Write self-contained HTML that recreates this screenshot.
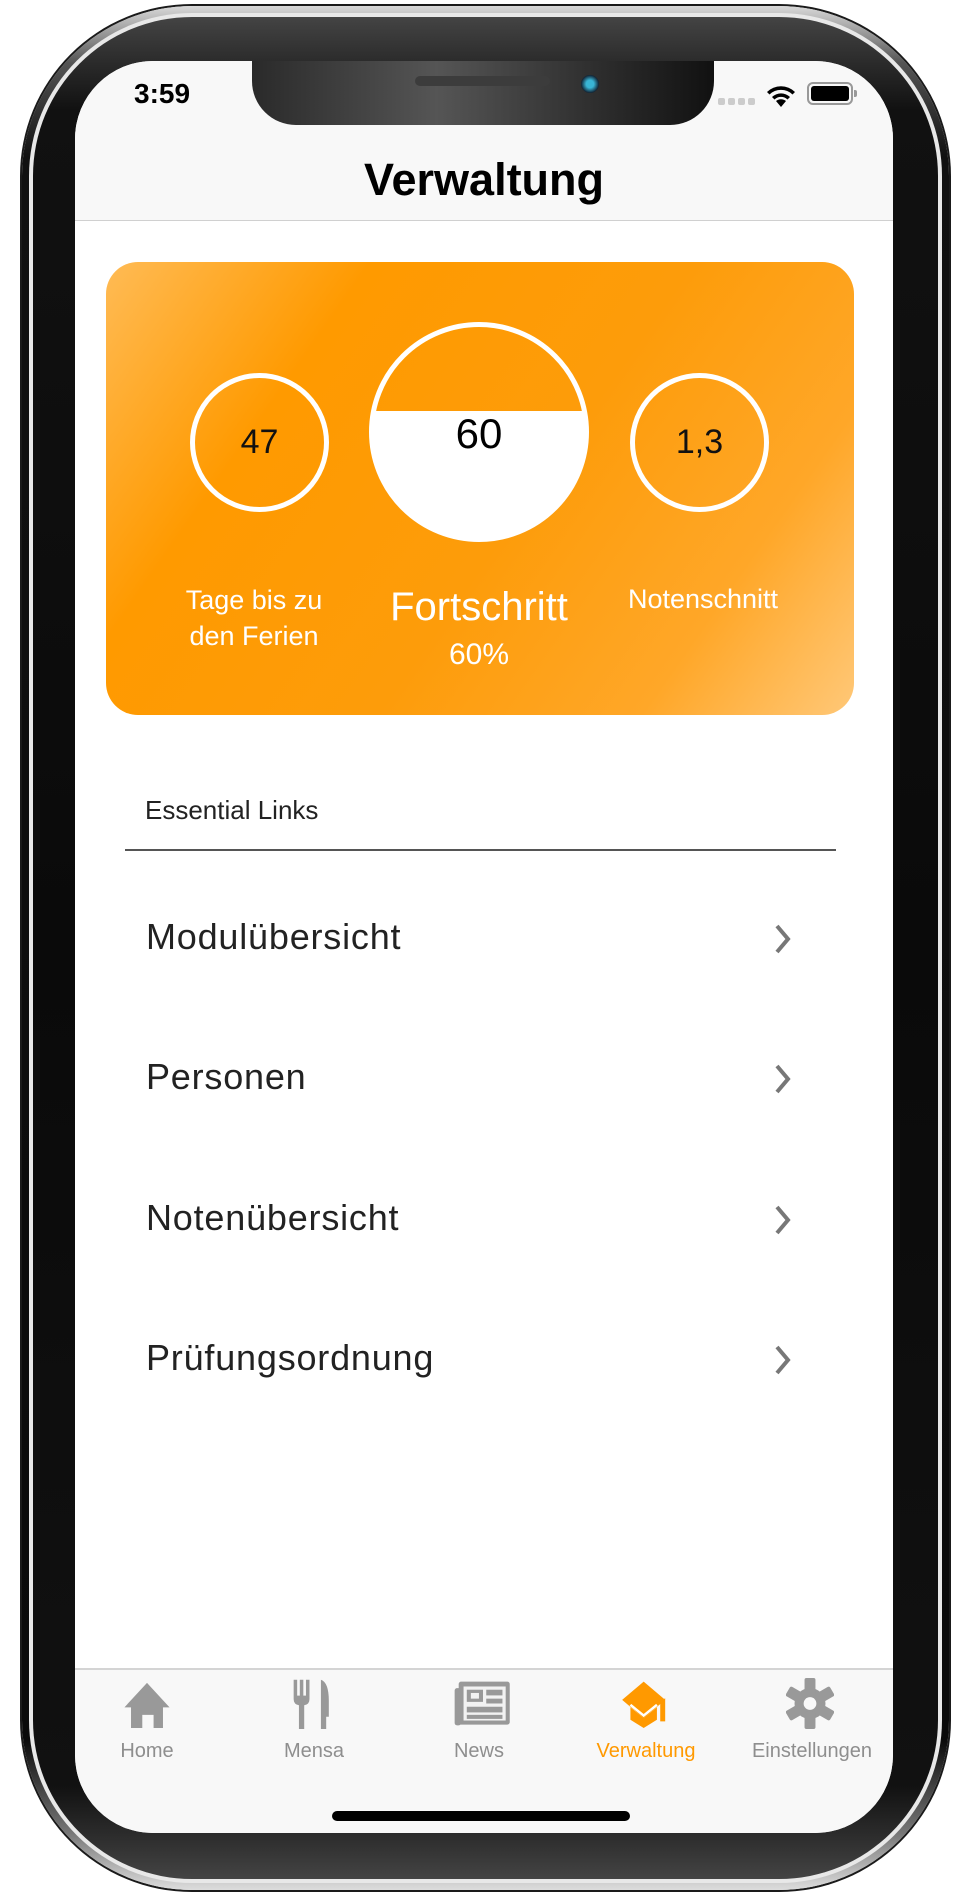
<!DOCTYPE html>
<html><head><meta charset="utf-8"><style>
*{margin:0;padding:0;box-sizing:border-box}
html,body{width:967px;height:1901px;background:#fff;overflow:hidden;font-family:"Liberation Sans",Arial,sans-serif}
.abs{position:absolute}
#outer{left:22px;top:6px;width:927px;height:1884px;border-radius:170px;background:linear-gradient(180deg,#d8d8d8,#555 3%,#111 8%,#0a0a0a 92%,#777 97%,#ddd);box-shadow:0 0 0 2px #1a1a1a}
#ring{left:29px;top:13px;width:913px;height:1870px;border-radius:163px;background:#e8e8e8}
#bezel{left:33px;top:17px;width:905px;height:1862px;border-radius:159px;background:linear-gradient(180deg,#444,#111 5%,#0a0a0a 50%,#111 95%,#444)}
#screen{left:75px;top:61px;width:818px;height:1772px;border-radius:78px;background:#fff;overflow:hidden}
.t{position:absolute;white-space:nowrap}
.li{position:absolute;left:71px;font-size:36px;letter-spacing:0.8px;color:#222;white-space:nowrap}
.lbl{position:absolute;top:1679px;text-align:center;font-size:20px;color:#8e8e8e;white-space:nowrap}
</style></head><body>
<div id="outer" class="abs"></div>
<div id="ring" class="abs"></div>
<div id="bezel" class="abs"></div>
<div id="screen" class="abs">
  <div class="abs" style="left:0;top:0;width:818px;height:160px;background:#f8f8f8;border-bottom:1px solid #d0d0d0"></div>
  <div class="t" style="left:59px;top:17px;font-size:28px;font-weight:bold;color:#000">3:59</div>
  <div class="abs" style="left:177px;top:-10px;width:462px;height:74px;border-radius:0 0 44px 44px;background:linear-gradient(90deg,#2a2a2a,#555 40%,#333 70%,#111)"></div>
  <div class="abs" style="left:340px;top:15px;width:135px;height:10px;border-radius:5px;background:#3c3c3c"></div>
  <div class="abs" style="left:506px;top:14px;width:18px;height:18px;border-radius:50%;background:radial-gradient(#39b5d5 30%,#123 70%)"></div>
  <div class="abs" style="left:643px;top:37px;width:7px;height:7px;border-radius:2px;background:#ccc;box-shadow:10px 0 #ccc,20px 0 #ccc,30px 0 #ccc"></div>
  <svg class="abs" style="left:690px;top:22px" width="32" height="24" viewBox="0 0 32 24"><path d="M16 24 L11 18 A8 8 0 0 1 21 18Z M7 14 A13 13 0 0 1 25 14 L22.5 16.5 A9.5 9.5 0 0 0 9.5 16.5Z M2 9 A20 20 0 0 1 30 9 L27.5 11.5 A16.5 16.5 0 0 0 4.5 11.5Z" fill="#000"/></svg>
  <div class="abs" style="left:732px;top:21px;width:46px;height:23px;border:2px solid #999;border-radius:6px;padding:2px"><div style="width:100%;height:100%;background:#000;border-radius:3px"></div></div>
  <div class="abs" style="left:779px;top:29px;width:3px;height:7px;background:#999;border-radius:0 2px 2px 0"></div>
  <div class="t" style="left:0;width:818px;text-align:center;top:93px;font-size:45px;font-weight:bold;color:#000">Verwaltung</div>
  <div class="abs" style="left:31px;top:201px;width:748px;height:453px;border-radius:32px;background:linear-gradient(125deg,#ffbb55 0%,#ff9a00 25%,#fd9c0a 55%,#ffa728 80%,#ffc878 100%)"></div>
  <div class="abs" style="left:115px;top:312px;width:139px;height:139px;border-radius:50%;border:5px solid #fff"></div>
  <div class="t" style="left:115px;width:139px;text-align:center;top:362px;font-size:34px;color:#111">47</div>
  <div class="abs" style="left:555px;top:312px;width:139px;height:139px;border-radius:50%;border:5px solid #fff"></div>
  <div class="t" style="left:555px;width:139px;text-align:center;top:362px;font-size:34px;color:#111">1,3</div>
  <div class="abs" style="left:294px;top:261px;width:220px;height:220px;border-radius:50%;border:5px solid #fff;overflow:hidden;background:linear-gradient(180deg,transparent 0,transparent 40%,#fff 40%)"></div>
  <div class="t" style="left:294px;width:220px;text-align:center;top:349px;font-size:42px;color:#000">60</div>
  <div class="t" style="left:99px;width:160px;text-align:center;top:521px;font-size:27px;line-height:36px;color:#fff">Tage bis zu<br>den Ferien</div>
  <div class="t" style="left:289px;width:230px;text-align:center;top:524px;font-size:40px;color:#fff">Fortschritt</div>
  <div class="t" style="left:289px;width:230px;text-align:center;top:577px;font-size:30px;color:#fff">60%</div>
  <div class="t" style="left:528px;width:200px;text-align:center;top:523px;font-size:27px;color:#fff">Notenschnitt</div>
  <div class="t" style="left:70px;top:734px;font-size:26px;color:#222">Essential Links</div>
  <div class="abs" style="left:50px;top:788px;width:711px;height:2px;background:#555"></div>
  <div class="li" style="top:855px">Modulübersicht</div>
  <div class="li" style="top:995px">Personen</div>
  <div class="li" style="top:1136px">Notenübersicht</div>
  <div class="li" style="top:1276px">Prüfungsordnung</div>
  <svg class="abs" style="left:696px;top:862px" width="24" height="32"><path d="M6 3 L17 16 L6 29" stroke="#777" stroke-width="4" fill="none"/></svg>
  <svg class="abs" style="left:696px;top:1002px" width="24" height="32"><path d="M6 3 L17 16 L6 29" stroke="#777" stroke-width="4" fill="none"/></svg>
  <svg class="abs" style="left:696px;top:1143px" width="24" height="32"><path d="M6 3 L17 16 L6 29" stroke="#777" stroke-width="4" fill="none"/></svg>
  <svg class="abs" style="left:696px;top:1283px" width="24" height="32"><path d="M6 3 L17 16 L6 29" stroke="#777" stroke-width="4" fill="none"/></svg>
  <div class="abs" style="left:0;top:1607px;width:818px;height:170px;background:#f8f8f8;border-top:2px solid #d4d4d4"></div>
  <svg class="abs" style="left:47px;top:1620px" width="50" height="47" viewBox="0 0 52 50"><path d="M26 2 L50 28 L43 28 L43 50 L33 50 L33 36 L21 36 L21 50 L9 50 L9 28 L2 28Z" fill="#999"/></svg>
  <svg class="abs" style="left:214px;top:1617px" width="48" height="51" viewBox="0 0 50 58"><path d="M3 2h4v18h3V2h4v18h3V2h4v22q0 6-6 7v27h-6V31q-6-1-6-7Z M34 58V2q9 3 9 24v18h-3v14Z" fill="#999"/></svg>
  <svg class="abs" style="left:374px;top:1619px" width="68" height="47" viewBox="0 0 70 58"><rect x="5" y="2" width="63" height="53" rx="3" fill="#999"/><rect x="0" y="10" width="8" height="46" rx="3" fill="#999"/><rect x="11" y="8" width="52" height="42" fill="#f2f2f2"/><rect x="15" y="12" width="20" height="15" fill="#999"/><rect x="20" y="16" width="10" height="7" fill="#f2f2f2"/><rect x="39" y="12" width="20" height="7" fill="#999"/><rect x="39" y="23" width="20" height="6" fill="#999"/><rect x="15" y="33" width="44" height="7" fill="#999"/><rect x="15" y="43" width="44" height="5" fill="#999"/></svg>
  <svg class="abs" style="left:543px;top:1619px" width="53" height="48" viewBox="0 0 58 58"><path d="M28 2 L54 24 L28 46 L2 24Z" fill="#ff9900"/><path d="M12 33 V48 L28 58 L44 48 V33 L28 46Z" fill="#ff9900"/><path d="M48 26 V50 H54 V22Z" fill="#ff9900"/><path d="M12 30 L28 43 L44 30" stroke="#fff" stroke-width="3" fill="none"/></svg>
  <svg class="abs" style="left:711px;top:1617px" width="48" height="51" viewBox="0 0 52 56"><g fill="#999"><circle cx="26" cy="28" r="17"/><rect x="20" y="0" width="12" height="56" rx="2"/><rect x="20" y="0" width="12" height="56" rx="2" transform="rotate(60 26 28)"/><rect x="20" y="0" width="12" height="56" rx="2" transform="rotate(120 26 28)"/></g><circle cx="26" cy="28" r="7" fill="#f8f8f8"/></svg>
  <div class="lbl" style="left:2px;width:140px">Home</div>
  <div class="lbl" style="left:169px;width:140px">Mensa</div>
  <div class="lbl" style="left:334px;width:140px">News</div>
  <div class="lbl" style="left:496px;width:150px;color:#ff9900">Verwaltung</div>
  <div class="lbl" style="left:657px;width:160px">Einstellungen</div>
  <div class="abs" style="left:257px;top:1750px;width:298px;height:10px;border-radius:5px;background:#000"></div>
</div>
</body></html>
